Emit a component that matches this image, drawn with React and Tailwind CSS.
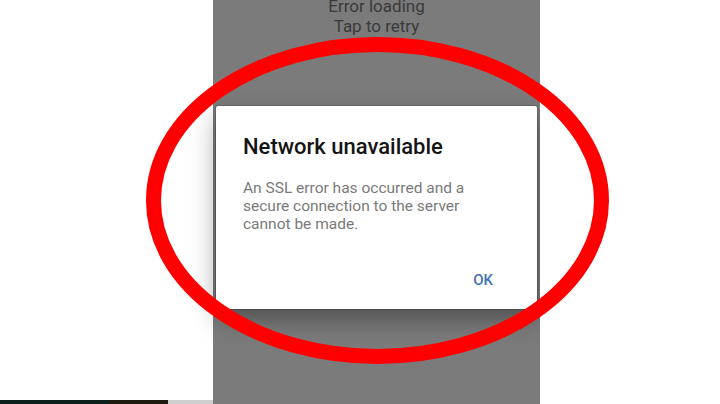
export default function App() {
  return (
    <div className="relative w-[720px] h-[404px] overflow-hidden bg-white flex font-['Roboto',sans-serif]">
      {/* left side */}
      <div className="w-[213px] h-full flex flex-col">
        <div className="flex-1 bg-white" />
        <div className="h-[4px] flex">
          <div className="w-[110px] bg-[#0d1f1a]" />
          <div className="w-[58px] bg-[#1f1a10]" />
          <div className="flex-1 bg-[#cfcfcf]" />
        </div>
      </div>

      {/* phone screen */}
      <div className="w-[327px] h-full bg-[#7b7b7b] flex flex-col">
        <div className="mt-[-4px] text-center text-[17px] leading-[20px] text-[#3a3a3a]">
          <p>Error loading</p>
          <p>Tap to retry</p>
        </div>

        <div className="ml-[3px] mt-[70px] w-[321px] h-[203px] bg-white rounded-[2px] shadow-[0_0_0_1px_rgba(0,0,0,0.15),0_10px_24px_rgba(0,0,0,0.35)] flex flex-col pt-[27px] pl-[27px]">
          <h2 className="text-[22px] leading-[28px] font-medium text-[#141414]">Network unavailable</h2>
          <p className="mt-[18px] text-[15.5px] leading-[18px] text-[#7a7a7a] w-[245px]">
            An SSL error has occurred and a secure connection to the server cannot be made.
          </p>
          <div className="mt-[37px] flex justify-end pr-[44px]">
            <button className="text-[15px] leading-[20px] font-medium text-[#4573b5]">OK</button>
          </div>
        </div>
      </div>

      {/* right side */}
      <div className="flex-1 bg-white" />

      {/* red annotation ellipse */}
      <svg className="absolute inset-0 pointer-events-none" width="720" height="404" viewBox="0 0 720 404">
        <ellipse cx="377.5" cy="200.5" rx="224" ry="156" fill="none" stroke="#ff0000" strokeWidth="15" />
      </svg>
    </div>
  );
}
